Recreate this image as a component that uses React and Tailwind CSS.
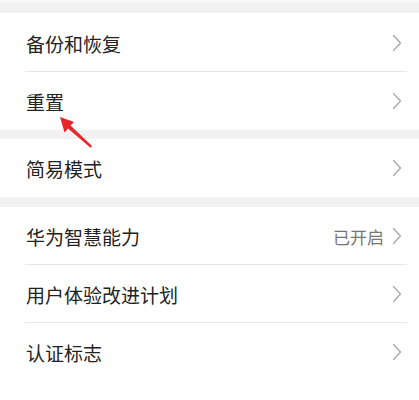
import React from "react";

const font = { fontFamily: '"Noto Sans CJK SC", "Noto Sans", sans-serif' };

function Chevron() {
  return (
    <svg width="10" height="18" viewBox="0 0 10 18" className="shrink-0">
      <path d="M1.5 1.5 L8.5 9 L1.5 16.5" fill="none" stroke="#a8a8a8" strokeWidth="1.3" strokeLinecap="round" strokeLinejoin="round" />
    </svg>
  );
}

function Row({ label, value, divider }) {
  return (
    <div className="relative flex h-[58px] items-center pl-[26px] pr-[17px]">
      <span className="flex-1 text-[19px] leading-none text-[#222]">{label}</span>
      {value && <span className="mr-[8px] text-[17px] leading-none text-[#777]">{value}</span>}
      <Chevron />
      {divider && <div className="absolute bottom-0 left-[25px] right-[12px] h-px bg-[#e6e6e6]" />}
    </div>
  );
}

export default function App() {
  return (
    <div className="relative h-[400px] w-[419px] overflow-hidden bg-white" style={font}>
      <div className="h-[3px] bg-[#f7f7f7]" />
      <div className="h-[10px] bg-[#f1f1f1]" />
      <div className="pt-px">
        <Row label="备份和恢复" divider />
        <Row label="重置" />
      </div>
      <div className="h-[9px] bg-[#f1f1f1]" />
      <Row label="简易模式" />
      <div className="h-[10px] bg-[#f1f1f1]" />
      <div>
        <Row label="华为智慧能力" value="已开启" divider />
        <Row label="用户体验改进计划" divider />
        <Row label="认证标志" />
      </div>
      <svg className="absolute left-0 top-0" width="419" height="400" viewBox="0 0 419 400">
        <polygon
          points="60,117 74,122 70.5,125.5 92,146 90.5,147.8 68,128.5 64.5,132.5"
          fill="#e8262a"
          strokeLinejoin="round"
        />
      </svg>
    </div>
  );
}
